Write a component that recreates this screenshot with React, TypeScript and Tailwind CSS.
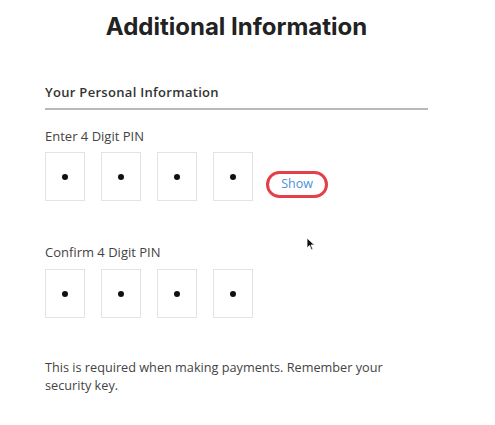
import React from "react";

const Box = () => (
  <div className="w-[40px] h-[49px] border border-[#e3e3e3] bg-white flex items-center justify-center">
    <div className="w-[6px] h-[6px] rounded-full bg-[#111]" />
  </div>
);

export default function App() {
  return (
    <div className="relative w-[495px] h-[425px] bg-white overflow-hidden" style={{ fontFamily: '"Open Sans", sans-serif' }}>
      <div className="ml-[45px] w-[383px] flex flex-col">
        <h1 className="mt-[12px] text-center text-[24px] leading-[30px] font-bold text-[#222]" style={{ fontFamily: 'Inter, sans-serif' }}>
          Additional Information
        </h1>
        <div className="mt-[41px] text-[13px] leading-[18px] font-semibold tracking-[0.3px] text-[#333]">
          Your Personal Information
        </div>
        <div className="mt-[7px] h-[2px] bg-[#b9b9b9]" />
        <div className="mt-[17px] text-[13px] leading-[18px] text-[#444]">Enter 4 Digit PIN</div>
        <div className="mt-[7px] flex items-center">
          <div className="flex gap-[16px]">
            <Box />
            <Box />
            <Box />
            <Box />
          </div>
          <div className="ml-[13px] mt-[15px] w-[62px] h-[27px] rounded-full border-[3px] border-[#e5404a] flex items-center justify-center text-[12.5px] text-[#4a90d9]">
            Show
          </div>
        </div>
        <div className="mt-[42px] text-[13px] leading-[18px] text-[#444]">Confirm 4 Digit PIN</div>
        <div className="mt-[8px] flex gap-[16px]">
          <Box />
          <Box />
          <Box />
          <Box />
        </div>
        <p className="mt-[40px] text-[12.7px] leading-[18px] text-[#444] w-[345px]">
          This is required when making payments. Remember your security key.
        </p>
      </div>
      <svg className="absolute left-[306px] top-[237px]" width="10" height="14" viewBox="0 0 10 14">
        <path d="M1 1 L1 11 L3.5 8.5 L5.5 13 L7 12.3 L5 8 L8.5 8 Z" fill="#111" stroke="#fff" strokeWidth="0.8" />
      </svg>
    </div>
  );
}
